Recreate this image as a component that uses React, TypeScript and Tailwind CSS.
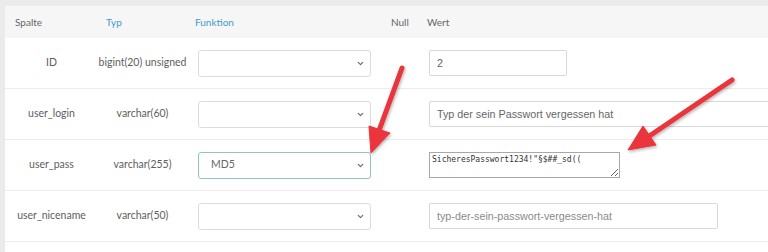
import { ChevronDown } from "lucide-react";

interface Row {
  name: string;
  type: string;
  fn: string;
  focused?: boolean;
  value: string;
  kind: "input" | "textarea";
  width: string;
  muted?: boolean;
}

const rows: Row[] = [
  { name: "ID", type: "bigint(20) unsigned", fn: "", value: "2", kind: "input", width: "w-[138px]" },
  { name: "user_login", type: "varchar(60)", fn: "", value: "Typ der sein Passwort vergessen hat", kind: "input", width: "w-[345px]" },
  { name: "user_pass", type: "varchar(255)", fn: "MD5", focused: true, value: "SicheresPasswort1234!\"§$##_sd((", kind: "textarea", width: "w-[191px]" },
  { name: "user_nicename", type: "varchar(50)", fn: "", value: "typ-der-sein-passwort-vergessen-hat", kind: "input", width: "w-[289px]", muted: true },
];

const cols = "grid grid-cols-[93px_89px_195px_38px_1fr]";

function FnSelect({ value, focused }: { value: string; focused?: boolean }) {
  return (
    <div
      className={`ml-[11px] flex h-[27px] w-[173px] items-center justify-between rounded-[3px] border bg-white pl-3 pr-[5px] text-[10.5px] text-[#666] ${
        focused ? "border-[#8fc3c7]" : "border-[#dcdcdc]"
      }`}
    >
      <span>{value}</span>
      <ChevronDown size={9} strokeWidth={3} className="text-[#666]" />
    </div>
  );
}

function ValueField({ row }: { row: Row }) {
  if (row.kind === "textarea") {
    return (
      <textarea
        readOnly
        value={row.value}
        className={`ml-[9px] block h-[26px] ${row.width} resize border border-[#a8a8a8] bg-white px-[2px] py-[2px] font-['DejaVu_Sans_Mono',monospace] text-[8px] leading-[10px] text-[#333] outline-none`}
      />
    );
  }
  return (
    <div
      className={`ml-[9px] flex h-[26px] ${row.width} shrink-0 items-center rounded-[2px] border border-[#d8d8d8] bg-white px-[7px] font-['Liberation_Sans',Arial,sans-serif] text-[10.75px] ${
        row.muted ? "text-[#8a8a8a]" : "text-[#666]"
      }`}
    >
      {row.value}
    </div>
  );
}

function Arrows() {
  return (
    <svg className="pointer-events-none absolute inset-0" width={768} height={252} viewBox="0 0 768 252">
      <defs>
        <filter id="sh" x="-20%" y="-20%" width="140%" height="140%">
          <feDropShadow dx="1" dy="1.5" stdDeviation="1.5" floodColor="#000" floodOpacity="0.3" />
        </filter>
      </defs>
      <g filter="url(#sh)" fill="#e9343b" stroke="#e9343b">
        <line x1="402" y1="68" x2="377" y2="136" strokeWidth="5" strokeLinecap="round" />
        <polygon points="371,153 369,126 390,133" strokeWidth="1" strokeLinejoin="round" />
        <line x1="732" y1="80" x2="642" y2="141" strokeWidth="5" strokeLinecap="round" />
        <polygon points="628,150 643,126 656,145" strokeWidth="1" strokeLinejoin="round" />
      </g>
    </svg>
  );
}

export default function App() {
  return (
    <div className="relative h-[252px] w-[768px] overflow-hidden bg-[#ebebeb] pl-[5px] pt-[6px] font-['Lato',sans-serif]">
      <div className="h-full bg-white">
        <div className={`${cols} h-[32px] items-center bg-[#f6f6f6] text-[10px]`}>
          <div className="pl-[10px] text-[#666]">Spalte</div>
          <div className="pl-[8px] text-[#3d9cc9]">Typ</div>
          <div className="pl-[8px] text-[#3d9cc9]">Funktion</div>
          <div className="pl-[9px] text-[#666]">Null</div>
          <div className="pl-[7px] text-[#666]">Wert</div>
        </div>
        {rows.map((r, i) => (
          <div
            key={r.name}
            className={`${cols} h-[51px] items-center whitespace-nowrap border-b border-[#ececec] text-[10.5px] text-[#5e5e5e] ${i === 0 ? "h-[50px]" : ""}`}
          >
            <div className="text-center">{r.name}</div>
            <div className="text-center">{r.type}</div>
            <div>
              <FnSelect value={r.fn} focused={r.focused} />
            </div>
            <div />
            <div>
              <ValueField row={r} />
            </div>
          </div>
        ))}
      </div>
      <Arrows />
    </div>
  );
}
